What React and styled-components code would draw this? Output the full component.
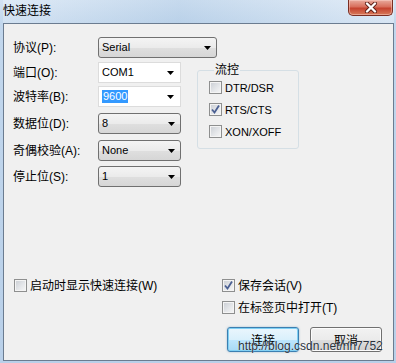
import React from "react";
import styled, { createGlobalStyle } from "styled-components";

const Global = createGlobalStyle`
  html, body { margin: 0; padding: 0; background: #bcd3eb; }
  body {
    font-family: "Liberation Sans", "Noto Sans CJK SC", sans-serif;
    font-size: 12px;
    color: #000;
  }
  * { box-sizing: border-box; }
`;

const Window = styled.div`
  position: relative;
  width: 396px;
  height: 363px;
  display: flex;
  flex-direction: column;
  padding: 0 2px 2px 3px;
  background: linear-gradient(180deg, #d3e3f3 0px, #c2d7ed 23px, #b9d0e9 100%);
  overflow: hidden;
`;

const TitleBar = styled.div`
  height: 23px;
  flex: none;
  display: flex;
  justify-content: space-between;
  align-items: flex-start;
  background: linear-gradient(90deg, rgba(255,255,255,0.25), rgba(160,190,220,0.25) 45%, rgba(255,255,255,0.35));
`;

const Title = styled.div`
  padding-top: 4px;
  font-size: 12px;
  line-height: 14px;
  color: #000;
`;

const CloseButton = styled.div`
  width: 45px;
  height: 16px;
  margin-right: 1px;
  display: flex;
  align-items: center;
  justify-content: center;
  border: 1px solid #7a2d22;
  border-top: none;
  border-radius: 0 0 5px 5px;
  background: linear-gradient(180deg, #e9ab9d 0%, #d86f5c 45%, #c5432f 55%, #d77a5a 100%);
  box-shadow: inset 0 0 0 1px rgba(255, 220, 210, 0.45);
`;

const Panel = styled.div`
  flex: 1;
  display: flex;
  flex-direction: column;
  border: 1px solid #6b7c90;
  background: #f0f0f0;
`;

const TopSection = styled.div`
  padding: 13px 0 0 9px;
`;

const Row = styled.div`
  display: flex;
  align-items: center;
  height: 21px;
  margin-top: ${(p) => p.$top || 0}px;
`;

const Label = styled.div`
  width: 85px;
  flex: none;
  font-size: 12px;
  line-height: 14px;
  white-space: nowrap;
`;

const Combo = styled.div`
  width: ${(p) => p.$w}px;
  height: 21px;
  flex: none;
  display: flex;
  align-items: center;
  justify-content: space-between;
  padding: 0 ${(p) => (p.$editable ? 6 : 5)}px 0 3px;
  font-size: 11px;
  line-height: 13px;
  border: 1px solid ${(p) => (p.$editable ? "#dcdcdc" : "#707070")};
  border-radius: ${(p) => (p.$editable ? 0 : 3)}px;
  background: ${(p) =>
    p.$editable
      ? "#ffffff"
      : "linear-gradient(180deg, #f4f4f4 0%, #ebebeb 50%, #dfdfdf 51%, #d6d6d6 100%)"};
`;

const Selected = styled.span`
  background: #3399ff;
  color: #fff;
  padding: 0 1px;
`;

const Lower = styled.div`
  display: flex;
  align-items: flex-start;
`;

const Form = styled.div`
  width: 168px;
  flex: none;
`;

const Group = styled.fieldset`
  margin: 6px 0 0 16px;
  width: 102px;
  min-width: 0;
  padding: 5px 0 10px 11px;
  border: 1px solid #d5dfe5;
  border-radius: 3px;
`;

const Legend = styled.legend`
  margin-left: 5px;
  padding: 0 1px;
  font-size: 12px;
  line-height: 12px;
`;

const CheckList = styled.div`
  display: flex;
  flex-direction: column;
  gap: ${(p) => p.$gap}px;
`;

const CheckRow = styled.div`
  display: flex;
  align-items: center;
  gap: 3px;
  height: 13px;
  font-size: ${(p) => p.$size}px;
  line-height: 14px;
  white-space: nowrap;
`;

const Box = styled.span`
  width: 13px;
  height: 13px;
  flex: none;
  display: flex;
  align-items: center;
  justify-content: center;
  border: 1px solid #8e8f8f;
  background: linear-gradient(135deg, #c9cdd3 0%, #e4e6e9 55%, #f7f7f7 100%);
  box-shadow: inset 0 0 0 1px #f4f4f4;
`;

const BottomSection = styled.div`
  margin-top: auto;
  display: flex;
  padding: 0 0 8px 10px;
`;

const LeftCol = styled.div`
  width: 208px;
  flex: none;
`;

const RightCol = styled.div`
  display: flex;
  flex-direction: column;
`;

const ButtonRow = styled.div`
  display: flex;
  gap: 11px;
  margin-top: 13px;
  padding-left: 5px;
`;

const Button = styled.div`
  width: 72px;
  height: 25px;
  display: flex;
  align-items: center;
  justify-content: center;
  font-size: 12px;
  border-radius: 3px;
  border: 1px solid ${(p) => (p.$default ? "#3c7fb1" : "#707070")};
  background: ${(p) =>
    p.$default
      ? "linear-gradient(180deg, #eaf6fd 0%, #d9f0fc 50%, #bee6fd 51%, #a7d9f5 100%)"
      : "linear-gradient(180deg, #f2f2f2 0%, #ebebeb 50%, #dddddd 51%, #cfcfcf 100%)"};
  box-shadow: ${(p) =>
    p.$default
      ? "inset 0 0 0 1px #7fd0f4, 0 0 2px rgba(60,127,177,0.5)"
      : "inset 0 0 0 1px #fcfcfc"};
`;

const Watermark = styled.div`
  position: absolute;
  left: 238px;
  top: 339px;
  font-family: "Liberation Sans", Arial, sans-serif;
  font-size: 12px;
  line-height: 14px;
  color: #2a323c;
  text-shadow: 0 0 1px rgba(255, 255, 255, 0.9);
  pointer-events: none;
`;

const Arrow = () => (
  <svg width="7" height="4" viewBox="0 0 7 4">
    <path d="M0 0h7L3.5 4z" fill="#000" />
  </svg>
);

const CloseX = () => (
  <svg width="14" height="11" viewBox="0 0 14 11">
    <path d="M3 1.5L11 9.5M11 1.5L3 9.5" stroke="#5a1c14" strokeWidth="4" strokeLinecap="round" />
    <path d="M3 1.5L11 9.5M11 1.5L3 9.5" stroke="#ffffff" strokeWidth="2.4" strokeLinecap="round" />
  </svg>
);

const Check = ({ checked, size = 11, children }) => (
  <CheckRow $size={size}>
    <Box>
      {checked && (
        <svg width="11" height="11" viewBox="0 0 11 11">
          <path d="M2 5.5L4.5 8.5L9 1.5" fill="none" stroke="#4a5f92" strokeWidth="1.8" />
        </svg>
      )}
    </Box>
    <span>{children}</span>
  </CheckRow>
);

export default function App() {
  return (
    <>
      <Global />
      <Window>
        <TitleBar>
          <Title>快速连接</Title>
          <CloseButton>
            <CloseX />
          </CloseButton>
        </TitleBar>
        <Panel>
          <TopSection>
            <Row>
              <Label>协议(P):</Label>
              <Combo $w={119}>
                <span>Serial</span>
                <Arrow />
              </Combo>
            </Row>
            <Lower>
              <Form>
                <Row $top={4}>
                  <Label>端口(O):</Label>
                  <Combo $w={83} $editable>
                    <span>COM1</span>
                    <Arrow />
                  </Combo>
                </Row>
                <Row $top={3}>
                  <Label>波特率(B):</Label>
                  <Combo $w={83} $editable>
                    <Selected>9600</Selected>
                    <Arrow />
                  </Combo>
                </Row>
                <Row $top={6}>
                  <Label>数据位(D):</Label>
                  <Combo $w={83}>
                    <span>8</span>
                    <Arrow />
                  </Combo>
                </Row>
                <Row $top={6}>
                  <Label>奇偶校验(A):</Label>
                  <Combo $w={83}>
                    <span>None</span>
                    <Arrow />
                  </Combo>
                </Row>
                <Row $top={5}>
                  <Label>停止位(S):</Label>
                  <Combo $w={83}>
                    <span>1</span>
                    <Arrow />
                  </Combo>
                </Row>
              </Form>
              <Group>
                <Legend>流控</Legend>
                <CheckList $gap={9}>
                  <Check>DTR/DSR</Check>
                  <Check checked>RTS/CTS</Check>
                  <Check>XON/XOFF</Check>
                </CheckList>
              </Group>
            </Lower>
          </TopSection>
          <BottomSection>
            <LeftCol>
              <Check size={12}>启动时显示快速连接(W)</Check>
            </LeftCol>
            <RightCol>
              <CheckList $gap={9}>
                <Check checked size={12}>保存会话(V)</Check>
                <Check size={12}>在标签页中打开(T)</Check>
              </CheckList>
              <ButtonRow>
                <Button $default>连接</Button>
                <Button>取消</Button>
              </ButtonRow>
            </RightCol>
          </BottomSection>
        </Panel>
        <Watermark>http://blog.csdn.net/nn7752</Watermark>
      </Window>
    </>
  );
}
